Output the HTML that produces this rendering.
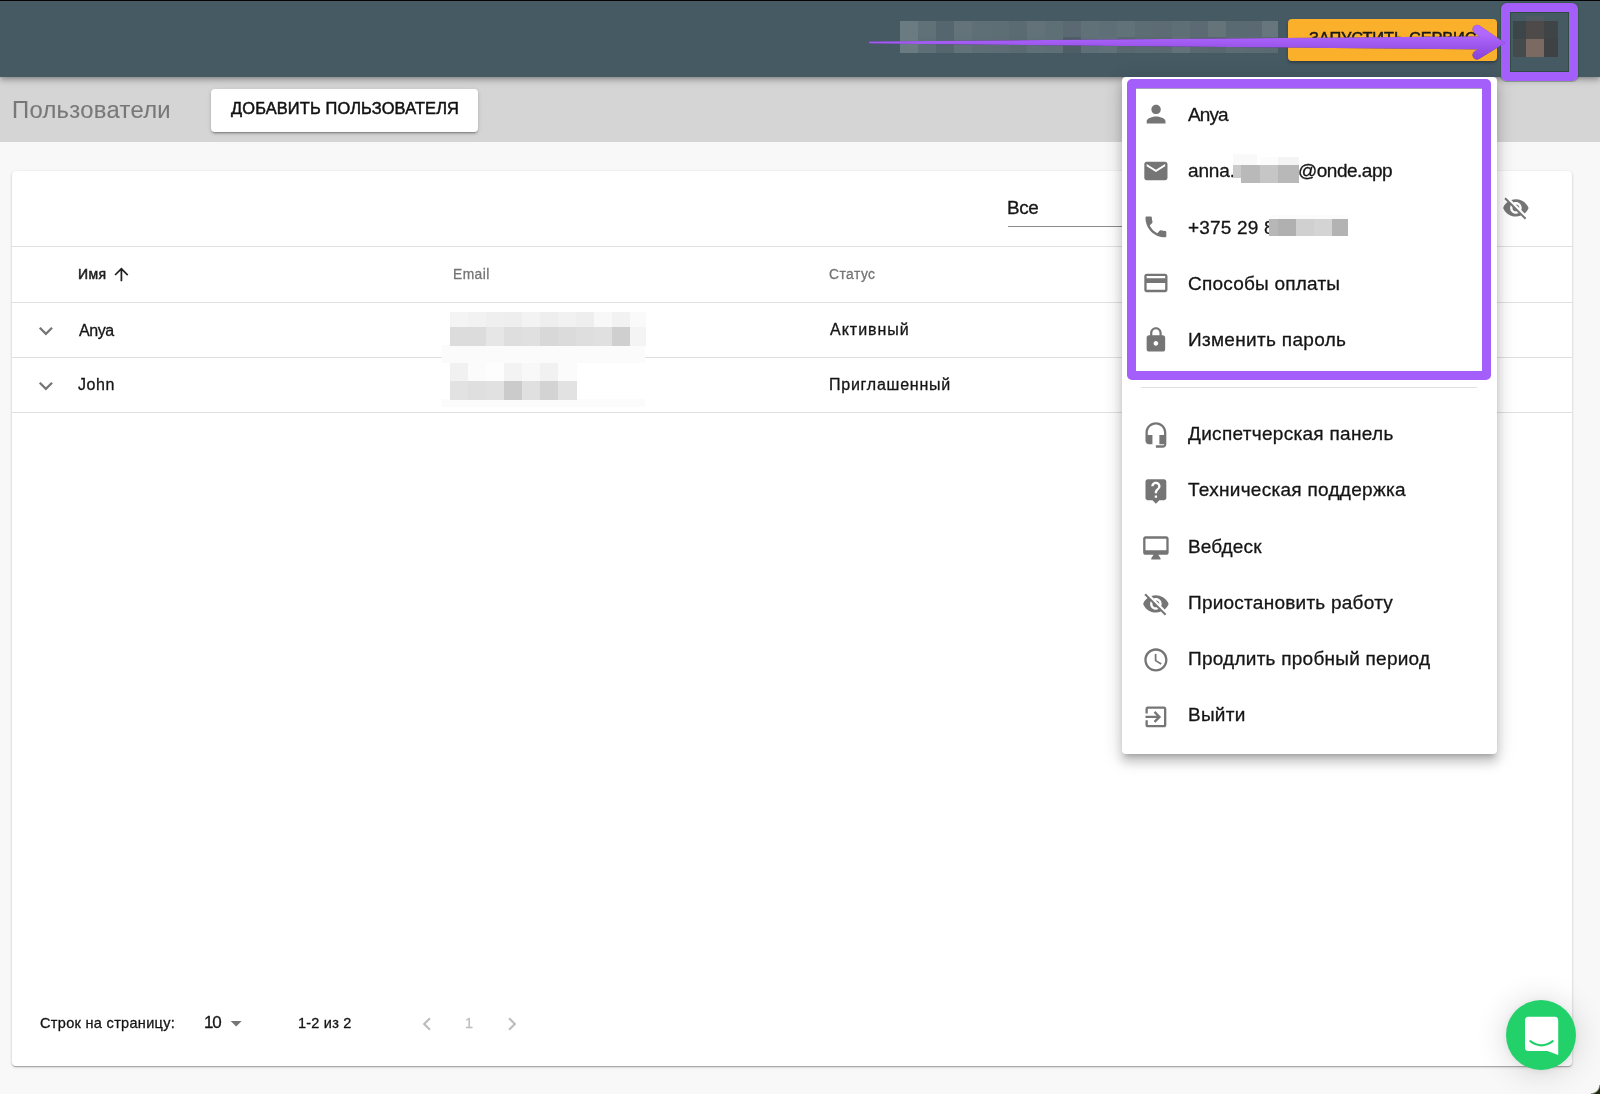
<!DOCTYPE html>
<html><head><meta charset="utf-8">
<style>
html,body{margin:0;padding:0;}
body{width:1600px;height:1094px;position:relative;overflow:hidden;background:#f8f8f8;font-family:"Liberation Sans",sans-serif;}
.a{position:absolute;}
.t{position:absolute;white-space:nowrap;will-change:transform;-webkit-text-stroke:0.3px currentColor;}
svg.i{position:absolute;}
.hr{position:absolute;height:1px;background:#e0e0e0;}
</style></head><body>
<div class="a" style="left:0;top:0;width:1600px;height:76.8px;background:#465a64;box-shadow:0 2px 4px -1px rgba(0,0,0,.2),0 4px 5px 0 rgba(0,0,0,.14),0 1px 10px 0 rgba(0,0,0,.12);z-index:3"></div>
<div class="a" style="left:0;top:0;width:1600px;height:1px;background:#050505;z-index:9"></div>
<div class="a" style="left:0;top:76px;width:1600px;height:66px;background:#d5d5d5;z-index:1"></div>
<div class="t" style="left:12.0px;top:95.67px;font-size:23.8px;line-height:28.56px;color:#787878;font-weight:400;letter-spacing:0.3px;z-index:2;-webkit-text-stroke:0.1px currentColor;">Пользователи</div>
<div class="a" style="left:211px;top:88.8px;width:266.8px;height:42.8px;background:#fff;border-radius:4px;box-shadow:0 3px 1px -2px rgba(0,0,0,.2),0 2px 2px 0 rgba(0,0,0,.14),0 1px 5px 0 rgba(0,0,0,.12);z-index:2"></div>
<div class="t" style="left:231px;top:99.37px;font-size:16.4px;line-height:19.68px;color:#111;font-weight:400;letter-spacing:0.15px;z-index:2;-webkit-text-stroke:0.5px currentColor;">ДОБАВИТЬ ПОЛЬЗОВАТЕЛЯ</div>
<div class="a" style="left:12px;top:171px;width:1560px;height:895px;background:#fff;border-radius:4px;box-shadow:0 1px 3px rgba(0,0,0,.2),0 1px 1px rgba(0,0,0,.14),0 2px 1px -1px rgba(0,0,0,.12);z-index:1"></div>
<div class="hr" style="left:12px;top:246px;width:1560px;z-index:2"></div>
<div class="hr" style="left:12px;top:302px;width:1560px;z-index:2"></div>
<div class="hr" style="left:12px;top:357px;width:1560px;z-index:2"></div>
<div class="hr" style="left:12px;top:412px;width:1560px;z-index:2"></div>
<div class="t" style="left:1007.4px;top:197.21px;font-size:18.9px;line-height:22.68px;color:#151515;font-weight:400;letter-spacing:-0.4px;z-index:2;">Все</div>
<div class="a" style="left:1008px;top:226px;width:130px;height:1px;background:#8c8c8c;z-index:2"></div>
<svg class="i" style="left:1501.50px;top:194.30px;z-index:2" width="27.8" height="27.8" viewBox="0 0 24 24"><path fill="#757575" d="M12 7c2.76 0 5 2.24 5 5 0 .65-.13 1.26-.36 1.83l2.92 2.92c1.51-1.26 2.7-2.89 3.43-4.75-1.73-4.39-6-7.5-11-7.5-1.4 0-2.74.25-3.98.7l2.16 2.16C10.74 7.13 11.35 7 12 7zM2 4.27l2.28 2.28.46.46C3.08 8.3 1.78 10.02 1 12c1.73 4.39 6 7.5 11 7.5 1.55 0 3.03-.3 4.38-.84l.42.42L19.73 22 21 20.73 3.27 3 2 4.27zM7.53 9.8l1.55 1.55c-.05.21-.08.43-.08.65 0 1.66 1.34 3 3 3 .22 0 .44-.03.65-.08l1.55 1.55c-.67.33-1.41.53-2.2.53-2.76 0-5-2.24-5-5 0-.79.2-1.53.53-2.2zm4.31-.78l3.15 3.15.02-.16c0-1.66-1.34-3-3-3l-.17.01z"/></svg>
<div class="t" style="left:77.75px;top:266.35px;font-size:14px;line-height:16.8px;color:#212121;font-weight:400;letter-spacing:0.45px;z-index:2;-webkit-text-stroke:0.5px currentColor;">Имя</div>
<svg class="i" style="left:110.80px;top:264.10px;z-index:2" width="20.8" height="20.8" viewBox="0 0 24 24"><path fill="#212121" d="M4 12l1.41 1.41L11 7.83V20h2V7.83l5.58 5.59L20 12l-8-8-8 8z"/></svg>
<div class="t" style="left:453.1px;top:266.74px;font-size:13.8px;line-height:16.56px;color:#757575;font-weight:400;letter-spacing:0.45px;z-index:2;">Email</div>
<div class="t" style="left:828.9px;top:266.54px;font-size:13.8px;line-height:16.56px;color:#757575;font-weight:400;letter-spacing:0.48px;z-index:2;">Статус</div>
<svg class="i" style="left:31.70px;top:316.80px;z-index:2" width="27.8" height="27.8" viewBox="0 0 24 24"><path fill="#757575" d="M16.59 8.59L12 13.17 7.41 8.59 6 10l6 6 6-6z"/></svg>
<div class="t" style="left:78.5px;top:320.65px;font-size:16.0px;line-height:19.2px;color:#151515;font-weight:400;letter-spacing:-0.4px;z-index:2;">Anya</div>
<div class="t" style="left:829.9px;top:320.15px;font-size:16.0px;line-height:19.2px;color:#151515;font-weight:400;letter-spacing:0.986px;z-index:2;">Активный</div>
<svg class="i" style="left:31.70px;top:371.60px;z-index:2" width="27.8" height="27.8" viewBox="0 0 24 24"><path fill="#757575" d="M16.59 8.59L12 13.17 7.41 8.59 6 10l6 6 6-6z"/></svg>
<div class="t" style="left:77.8px;top:375.45px;font-size:16.0px;line-height:19.2px;color:#151515;font-weight:400;letter-spacing:0.6px;z-index:2;">John</div>
<div class="t" style="left:828.9px;top:374.95px;font-size:16.0px;line-height:19.2px;color:#151515;font-weight:400;letter-spacing:0.755px;z-index:2;">Приглашенный</div>
<div class="a" style="left:442px;top:345px;width:203px;height:18px;background:#fbfbfb;z-index:2"></div>
<div class="a" style="left:442px;top:399px;width:203px;height:8px;background:#fbfbfb;z-index:2"></div>
<div class="a" style="left:450.0px;top:312.0px;width:18.5px;height:15.5px;background:#f4f4f4;z-index:2"></div>
<div class="a" style="left:468.0px;top:312.0px;width:18.5px;height:15.5px;background:#f2f2f2;z-index:2"></div>
<div class="a" style="left:486.0px;top:312.0px;width:18.5px;height:15.5px;background:#efefef;z-index:2"></div>
<div class="a" style="left:504.0px;top:312.0px;width:18.5px;height:15.5px;background:#eeeeee;z-index:2"></div>
<div class="a" style="left:522.0px;top:312.0px;width:18.5px;height:15.5px;background:#f3f3f3;z-index:2"></div>
<div class="a" style="left:540.0px;top:312.0px;width:18.5px;height:15.5px;background:#eeeeee;z-index:2"></div>
<div class="a" style="left:558.0px;top:312.0px;width:18.5px;height:15.5px;background:#f1f1f1;z-index:2"></div>
<div class="a" style="left:576.0px;top:312.0px;width:18.5px;height:15.5px;background:#eeeeee;z-index:2"></div>
<div class="a" style="left:594.0px;top:312.0px;width:18.5px;height:15.5px;background:#f8f8f8;z-index:2"></div>
<div class="a" style="left:612.0px;top:312.0px;width:18.5px;height:15.5px;background:#f2f2f2;z-index:2"></div>
<div class="a" style="left:630.0px;top:312.0px;width:15.5px;height:15.5px;background:#fafafa;z-index:2"></div>
<div class="a" style="left:450.0px;top:327.0px;width:18.5px;height:18.5px;background:#dcdcdc;z-index:2"></div>
<div class="a" style="left:468.0px;top:327.0px;width:18.5px;height:18.5px;background:#dcdcdc;z-index:2"></div>
<div class="a" style="left:486.0px;top:327.0px;width:18.5px;height:18.5px;background:#e6e6e6;z-index:2"></div>
<div class="a" style="left:504.0px;top:327.0px;width:18.5px;height:18.5px;background:#dedede;z-index:2"></div>
<div class="a" style="left:522.0px;top:327.0px;width:18.5px;height:18.5px;background:#e0e0e0;z-index:2"></div>
<div class="a" style="left:540.0px;top:327.0px;width:18.5px;height:18.5px;background:#d8d8d8;z-index:2"></div>
<div class="a" style="left:558.0px;top:327.0px;width:18.5px;height:18.5px;background:#dbdbdb;z-index:2"></div>
<div class="a" style="left:576.0px;top:327.0px;width:18.5px;height:18.5px;background:#dedede;z-index:2"></div>
<div class="a" style="left:594.0px;top:327.0px;width:18.5px;height:18.5px;background:#e0e0e0;z-index:2"></div>
<div class="a" style="left:612.0px;top:327.0px;width:18.5px;height:18.5px;background:#cfcfcf;z-index:2"></div>
<div class="a" style="left:630.0px;top:327.0px;width:15.5px;height:18.5px;background:#f4f4f4;z-index:2"></div>
<div class="a" style="left:450.0px;top:363.0px;width:18.5px;height:18.5px;background:#f1f1f1;z-index:2"></div>
<div class="a" style="left:468.0px;top:363.0px;width:18.5px;height:18.5px;background:#fbfbfb;z-index:2"></div>
<div class="a" style="left:486.0px;top:363.0px;width:18.5px;height:18.5px;background:#fdfdfd;z-index:2"></div>
<div class="a" style="left:504.0px;top:363.0px;width:18.5px;height:18.5px;background:#f3f3f3;z-index:2"></div>
<div class="a" style="left:522.0px;top:363.0px;width:18.5px;height:18.5px;background:#f8f8f8;z-index:2"></div>
<div class="a" style="left:540.0px;top:363.0px;width:18.5px;height:18.5px;background:#f1f1f1;z-index:2"></div>
<div class="a" style="left:558.0px;top:363.0px;width:18.5px;height:18.5px;background:#fbfbfb;z-index:2"></div>
<div class="a" style="left:450.0px;top:381.0px;width:18.5px;height:18.5px;background:#e2e2e2;z-index:2"></div>
<div class="a" style="left:468.0px;top:381.0px;width:18.5px;height:18.5px;background:#dfdfdf;z-index:2"></div>
<div class="a" style="left:486.0px;top:381.0px;width:18.5px;height:18.5px;background:#e1e1e1;z-index:2"></div>
<div class="a" style="left:504.0px;top:381.0px;width:18.5px;height:18.5px;background:#cbcbcb;z-index:2"></div>
<div class="a" style="left:522.0px;top:381.0px;width:18.5px;height:18.5px;background:#e0e0e0;z-index:2"></div>
<div class="a" style="left:540.0px;top:381.0px;width:18.5px;height:18.5px;background:#d3d3d3;z-index:2"></div>
<div class="a" style="left:558.0px;top:381.0px;width:18.5px;height:18.5px;background:#e2e2e2;z-index:2"></div>
<div class="t" style="left:40.1px;top:1015.37px;font-size:14.5px;line-height:17.4px;color:#151515;font-weight:400;letter-spacing:0.318px;z-index:2;">Строк на страницу:</div>
<div class="t" style="left:203.7px;top:1013.01px;font-size:17px;line-height:20.4px;color:#151515;font-weight:400;letter-spacing:-1.2px;z-index:2;">10</div>
<svg class="i" style="left:223.10px;top:1010.30px;z-index:2" width="26.4" height="26.4" viewBox="0 0 24 24"><path fill="#757575" d="M7 10l5 5 5-5z"/></svg>
<div class="t" style="left:298.2px;top:1015.27px;font-size:14.5px;line-height:17.4px;color:#151515;font-weight:400;letter-spacing:0.214px;z-index:2;">1-2 из 2</div>
<svg class="i" style="left:414.00px;top:1010.50px;z-index:2" width="26" height="26" viewBox="0 0 24 24"><path fill="#bdbdbd" d="M15.41 7.41L14 6l-6 6 6 6 1.41-1.41L10.83 12z"/></svg>
<div class="t" style="left:465.4px;top:1015.37px;font-size:14.4px;line-height:17.28px;color:#bdbdbd;font-weight:400;letter-spacing:0px;z-index:2;">1</div>
<svg class="i" style="left:499.00px;top:1010.50px;z-index:2" width="26" height="26" viewBox="0 0 24 24"><path fill="#bdbdbd" d="M10 6L8.59 7.41 13.17 12l-4.58 4.59L10 18l6-6z"/></svg>
<div class="a" style="left:900.0px;top:21px;width:18.5px;height:16px;background:#6b7b82;z-index:4"></div>
<div class="a" style="left:900.0px;top:37px;width:18.5px;height:16px;background:#6b7b82;z-index:4"></div>
<div class="a" style="left:918.1px;top:21px;width:18.5px;height:16px;background:#617178;z-index:4"></div>
<div class="a" style="left:918.1px;top:37px;width:18.5px;height:16px;background:#5f6f77;z-index:4"></div>
<div class="a" style="left:936.2px;top:21px;width:18.5px;height:16px;background:#56666f;z-index:4"></div>
<div class="a" style="left:936.2px;top:37px;width:18.5px;height:16px;background:#56666f;z-index:4"></div>
<div class="a" style="left:954.3px;top:21px;width:18.5px;height:16px;background:#637379;z-index:4"></div>
<div class="a" style="left:954.3px;top:37px;width:18.5px;height:16px;background:#627279;z-index:4"></div>
<div class="a" style="left:972.4px;top:21px;width:18.5px;height:16px;background:#5f6f76;z-index:4"></div>
<div class="a" style="left:972.4px;top:37px;width:18.5px;height:16px;background:#5e6e75;z-index:4"></div>
<div class="a" style="left:990.5px;top:21px;width:18.5px;height:16px;background:#5e6e75;z-index:4"></div>
<div class="a" style="left:990.5px;top:37px;width:18.5px;height:16px;background:#5e6d75;z-index:4"></div>
<div class="a" style="left:1008.6px;top:21px;width:18.5px;height:16px;background:#5b6b72;z-index:4"></div>
<div class="a" style="left:1008.6px;top:37px;width:18.5px;height:16px;background:#5a6a71;z-index:4"></div>
<div class="a" style="left:1026.7px;top:21px;width:18.5px;height:16px;background:#627278;z-index:4"></div>
<div class="a" style="left:1026.7px;top:37px;width:18.5px;height:16px;background:#607077;z-index:4"></div>
<div class="a" style="left:1044.8px;top:21px;width:18.5px;height:16px;background:#5f6f76;z-index:4"></div>
<div class="a" style="left:1044.8px;top:37px;width:18.5px;height:16px;background:#5f6f76;z-index:4"></div>
<div class="a" style="left:1062.9px;top:21px;width:18.5px;height:16px;background:#5b6a72;z-index:4"></div>
<div class="a" style="left:1062.9px;top:37px;width:18.5px;height:16px;background:#4f5e66;z-index:4"></div>
<div class="a" style="left:1081.0px;top:21px;width:18.5px;height:16px;background:#617178;z-index:4"></div>
<div class="a" style="left:1081.0px;top:37px;width:18.5px;height:16px;background:#5f6f77;z-index:4"></div>
<div class="a" style="left:1099.1px;top:21px;width:18.5px;height:16px;background:#5f6f77;z-index:4"></div>
<div class="a" style="left:1099.1px;top:37px;width:18.5px;height:16px;background:#617178;z-index:4"></div>
<div class="a" style="left:1117.2px;top:21px;width:18.5px;height:16px;background:#627279;z-index:4"></div>
<div class="a" style="left:1117.2px;top:37px;width:18.5px;height:16px;background:#59686f;z-index:4"></div>
<div class="a" style="left:1135.3px;top:21px;width:18.5px;height:16px;background:#5d6d74;z-index:4"></div>
<div class="a" style="left:1135.3px;top:37px;width:18.5px;height:16px;background:#5a6a71;z-index:4"></div>
<div class="a" style="left:1153.4px;top:21px;width:18.5px;height:16px;background:#5d6c74;z-index:4"></div>
<div class="a" style="left:1153.4px;top:37px;width:18.5px;height:16px;background:#5a6970;z-index:4"></div>
<div class="a" style="left:1171.5px;top:21px;width:18.5px;height:16px;background:#5f6f76;z-index:4"></div>
<div class="a" style="left:1171.5px;top:37px;width:18.5px;height:16px;background:#637278;z-index:4"></div>
<div class="a" style="left:1189.6px;top:21px;width:18.5px;height:16px;background:#5c6b73;z-index:4"></div>
<div class="a" style="left:1189.6px;top:37px;width:18.5px;height:16px;background:#5a6970;z-index:4"></div>
<div class="a" style="left:1207.7px;top:21px;width:18.5px;height:16px;background:#657479;z-index:4"></div>
<div class="a" style="left:1207.7px;top:37px;width:18.5px;height:16px;background:#58676e;z-index:4"></div>
<div class="a" style="left:1225.8px;top:21px;width:18.5px;height:16px;background:#5a6a72;z-index:4"></div>
<div class="a" style="left:1225.8px;top:37px;width:18.5px;height:16px;background:#5d6c73;z-index:4"></div>
<div class="a" style="left:1243.9px;top:21px;width:18.5px;height:16px;background:#5b6a72;z-index:4"></div>
<div class="a" style="left:1243.9px;top:37px;width:18.5px;height:16px;background:#5c6b72;z-index:4"></div>
<div class="a" style="left:1262.0px;top:21px;width:16.4px;height:16px;background:#66767c;z-index:4"></div>
<div class="a" style="left:1262.0px;top:37px;width:16.4px;height:16px;background:#5b6a71;z-index:4"></div>
<div class="a" style="left:1288px;top:19px;width:209px;height:42px;background:#fbb02b;border-radius:4px;box-shadow:0 2px 3px rgba(0,0,0,.3);z-index:4"></div>
<div class="t" style="left:1309px;top:28.87px;font-size:16.4px;line-height:19.68px;color:#1a1a1a;font-weight:400;letter-spacing:-0.13px;z-index:4;-webkit-text-stroke:0.5px currentColor;">ЗАПУСТИТЬ СЕРВИС</div>
<div class="a" style="left:1526px;top:15.6px;width:18px;height:6px;background:#4f5b62;z-index:4"></div>
<div class="a" style="left:1512.5px;top:21px;width:13.8px;height:17.75px;background:#3c4548;z-index:4"></div>
<div class="a" style="left:1526px;top:21px;width:18.3px;height:17.75px;background:#4e4a4a;z-index:4"></div>
<div class="a" style="left:1544px;top:21px;width:14.3px;height:17.75px;background:#3f4547;z-index:4"></div>
<div class="a" style="left:1512.5px;top:38.75px;width:13.8px;height:17.75px;background:#454a4d;z-index:4"></div>
<div class="a" style="left:1526px;top:38.75px;width:18.3px;height:17.75px;background:#7a6a62;z-index:4"></div>
<div class="a" style="left:1544px;top:38.75px;width:14.3px;height:17.75px;background:#3e4244;z-index:4"></div>
<div class="a" style="left:1500.6px;top:3.1px;width:59.4px;height:59.6px;border:9.5px solid #a45ffa;border-radius:6px;box-shadow:inset 0 0 0 1px rgba(20,60,20,.45),0 0 0 1px rgba(30,80,30,.35);z-index:8"></div>
<svg class="i" style="left:0;top:0;z-index:8;filter:drop-shadow(0 0.7px 0.6px rgba(0,20,0,.55))" width="1600" height="100" viewBox="0 0 1600 100">
<defs><linearGradient id="ag" gradientUnits="userSpaceOnUse" x1="0" y1="34" x2="0" y2="58"><stop offset="0" stop-color="#b068ff"/><stop offset="1" stop-color="#8a44da"/></linearGradient></defs>
<path fill="url(#ag)" d="M869.5 41.6 Q868.3 42.5 869.5 43.6 L1490 49.4 L1490 36.2 Z"/>
<path d="M1477 29.3 L1496.8 42.8 L1477 55" fill="none" stroke="url(#ag)" stroke-width="9" stroke-linecap="round" stroke-linejoin="miter" stroke-miterlimit="10"/>
</svg>
<div class="a" style="left:1122.2px;top:76.5px;width:375.3px;height:677.8px;background:#fff;border-radius:4px;box-shadow:0 5px 5px -3px rgba(0,0,0,.2),0 8px 10px 1px rgba(0,0,0,.14),0 3px 18px 3px rgba(0,0,0,.12);z-index:6"></div>
<div class="a" style="left:1126.7px;top:79px;width:346.2px;height:282.5px;border:9.2px solid #a45ffa;border-top-width:9.7px;border-radius:5px;box-shadow:inset 0 1px 0 rgba(60,40,120,.45);z-index:8"></div>
<div class="hr" style="left:1141px;top:387px;width:336px;z-index:7"></div>
<svg class="i" style="left:1141.80px;top:100.10px;z-index:7" width="28.2" height="28.2" viewBox="0 0 24 24"><path fill="#757575" d="M12 12c2.21 0 4-1.79 4-4s-1.79-4-4-4-4 1.79-4 4 1.79 4 4 4zm0 2c-2.67 0-8 1.34-8 4v2h16v-2c0-2.66-5.33-4-8-4z"/></svg>
<div class="t" style="left:1187.6px;top:104.01px;font-size:19.0px;line-height:22.8px;color:#151515;font-weight:400;letter-spacing:-0.9px;z-index:7;">Anya</div>
<svg class="i" style="left:1142.00px;top:156.60px;z-index:7" width="27.8" height="27.8" viewBox="0 0 24 24"><path fill="#757575" d="M20 4H4c-1.1 0-1.99.9-1.99 2L2 18c0 1.1.9 2 2 2h16c1.1 0 2-.9 2-2V6c0-1.1-.9-2-2-2zm0 4l-8 5-8-5V6l8 5 8-5v2z"/></svg>
<div class="t" style="left:1187.6px;top:160.31px;font-size:19.0px;line-height:22.8px;color:#151515;font-weight:400;letter-spacing:-0.15px;z-index:7;">anna.</div>
<div class="t" style="left:1298.3px;top:160.31px;font-size:19.0px;line-height:22.8px;color:#151515;font-weight:400;letter-spacing:-0.5px;z-index:7;">@onde.app</div>
<svg class="i" style="left:1142.00px;top:212.90px;z-index:7" width="27.8" height="27.8" viewBox="0 0 24 24"><path fill="#757575" d="M6.62 10.79c1.44 2.83 3.76 5.14 6.59 6.59l2.2-2.2c.27-.27.67-.36 1.02-.24 1.12.37 2.33.57 3.57.57.55 0 1 .45 1 1V20c0 .55-.45 1-1 1-9.39 0-17-7.61-17-17 0-.55.45-1 1-1h3.5c.55 0 1 .45 1 1 0 1.25.2 2.45.57 3.57.11.35.03.74-.25 1.02l-2.2 2.2z"/></svg>
<div class="t" style="left:1187.6px;top:216.61px;font-size:19.0px;line-height:22.8px;color:#151515;font-weight:400;letter-spacing:0.2px;z-index:7;">+375 29 8</div>
<svg class="i" style="left:1142.00px;top:269.20px;z-index:7" width="27.8" height="27.8" viewBox="0 0 24 24"><path fill="#757575" d="M20 4H4c-1.11 0-1.99.89-1.99 2L2 18c0 1.11.89 2 2 2h16c1.11 0 2-.89 2-2V6c0-1.11-.89-2-2-2zm0 14H4v-6h16v6zm0-10H4V6h16v2z"/></svg>
<div class="t" style="left:1187.6px;top:272.91px;font-size:19.0px;line-height:22.8px;color:#151515;font-weight:400;letter-spacing:0.223px;z-index:7;">Способы оплаты</div>
<svg class="i" style="left:1142.00px;top:325.50px;z-index:7" width="27.8" height="27.8" viewBox="0 0 24 24"><path fill="#757575" d="M18 8h-1V6c0-2.76-2.24-5-5-5S7 3.24 7 6v2H6c-1.1 0-2 .9-2 2v10c0 1.1.9 2 2 2h12c1.1 0 2-.9 2-2V10c0-1.1-.9-2-2-2zm-6 9c-1.1 0-2-.9-2-2s.9-2 2-2 2 .9 2 2-.9 2-2 2zm3.1-9H8.9V6c0-1.71 1.39-3.1 3.1-3.1 1.71 0 3.1 1.39 3.1 3.1v2z"/></svg>
<div class="t" style="left:1187.6px;top:329.21px;font-size:19.0px;line-height:22.8px;color:#151515;font-weight:400;letter-spacing:0.314px;z-index:7;">Изменить пароль</div>
<svg class="i" style="left:1142.00px;top:421.10px;z-index:7" width="27.8" height="27.8" viewBox="0 0 24 24"><path fill="#757575" d="M12 1c-4.97 0-9 4.03-9 9v7c0 1.66 1.34 3 3 3h3v-8H5v-2c0-3.87 3.13-7 7-7s7 3.13 7 7v2h-4v8h4v1h-7v2h6c1.66 0 3-1.34 3-3V10c0-4.97-4.03-9-9-9z"/></svg>
<div class="t" style="left:1187.6px;top:422.91px;font-size:19.0px;line-height:22.8px;color:#151515;font-weight:400;letter-spacing:0.3px;z-index:7;">Диспетчерская панель</div>
<svg class="i" style="left:1142.00px;top:477.40px;z-index:7" width="27.8" height="27.8" viewBox="0 0 24 24"><path fill="#757575" d="M19 2H5c-1.11 0-2 .9-2 2v14c0 1.1.89 2 2 2h4l3 3 3-3h4c1.1 0 2-.9 2-2V4c0-1.1-.9-2-2-2zm-6 16h-2v-2h2v2zm2.07-7.75l-.9.92C13.45 11.9 13 12.5 13 14h-2v-.5c0-1.1.45-2.1 1.17-2.83l1.24-1.26c.37-.36.59-.86.59-1.41 0-1.1-.9-2-2-2s-2 .9-2 2H8c0-2.21 1.79-4 4-4s4 1.79 4 4c0 .88-.36 1.68-.93 2.25z"/></svg>
<div class="t" style="left:1187.6px;top:479.21px;font-size:19.0px;line-height:22.8px;color:#151515;font-weight:400;letter-spacing:0.28px;z-index:7;">Техническая поддержка</div>
<svg class="i" style="left:1142.00px;top:533.70px;z-index:7" width="27.8" height="27.8" viewBox="0 0 24 24"><path fill="#757575" d="M21 2H3c-1.1 0-2 .9-2 2v12c0 1.1.9 2 2 2h7l-2 3v1h8v-1l-2-3h7c1.1 0 2-.9 2-2V4c0-1.1-.9-2-2-2zm0 12H3V4h18v10z"/></svg>
<div class="t" style="left:1187.6px;top:535.51px;font-size:19.0px;line-height:22.8px;color:#151515;font-weight:400;letter-spacing:0.167px;z-index:7;">Вебдеск</div>
<svg class="i" style="left:1142.00px;top:590.00px;z-index:7" width="27.8" height="27.8" viewBox="0 0 24 24"><path fill="#757575" d="M12 7c2.76 0 5 2.24 5 5 0 .65-.13 1.26-.36 1.83l2.92 2.92c1.51-1.26 2.7-2.89 3.43-4.75-1.73-4.39-6-7.5-11-7.5-1.4 0-2.74.25-3.98.7l2.16 2.16C10.74 7.13 11.35 7 12 7zM2 4.27l2.28 2.28.46.46C3.08 8.3 1.78 10.02 1 12c1.73 4.39 6 7.5 11 7.5 1.55 0 3.03-.3 4.38-.84l.42.42L19.73 22 21 20.73 3.27 3 2 4.27zM7.53 9.8l1.55 1.55c-.05.21-.08.43-.08.65 0 1.66 1.34 3 3 3 .22 0 .44-.03.65-.08l1.55 1.55c-.67.33-1.41.53-2.2.53-2.76 0-5-2.24-5-5 0-.79.2-1.53.53-2.2zm4.31-.78l3.15 3.15.02-.16c0-1.66-1.34-3-3-3l-.17.01z"/></svg>
<div class="t" style="left:1187.6px;top:591.81px;font-size:19.0px;line-height:22.8px;color:#151515;font-weight:400;letter-spacing:0.242px;z-index:7;">Приостановить работу</div>
<svg class="i" style="left:1142.00px;top:646.30px;z-index:7" width="27.8" height="27.8" viewBox="0 0 24 24"><path fill="#757575" d="M11.99 2C6.47 2 2 6.48 2 12s4.47 10 9.99 10C17.52 22 22 17.52 22 12S17.52 2 11.99 2zM12 20c-4.42 0-8-3.58-8-8s3.58-8 8-8 8 3.58 8 8-3.58 8-8 8zm.5-13H11v6l5.25 3.15.75-1.23-4.5-2.67z"/></svg>
<div class="t" style="left:1187.6px;top:648.11px;font-size:19.0px;line-height:22.8px;color:#151515;font-weight:400;letter-spacing:0.245px;z-index:7;">Продлить пробный период</div>
<svg class="i" style="left:1142.00px;top:702.60px;z-index:7" width="27.8" height="27.8" viewBox="0 0 24 24"><path fill="#757575" d="M10.09 15.59L11.5 17l5-5-5-5-1.41 1.41L12.67 11H3v2h9.67l-2.58 2.59zM19 3H5c-1.11 0-2 .9-2 2v4h2V5h14v14H5v-4H3v4c0 1.1.89 2 2 2h14c1.1 0 2-.9 2-2V5c0-1.1-.9-2-2-2z"/></svg>
<div class="t" style="left:1187.6px;top:704.41px;font-size:19.0px;line-height:22.8px;color:#151515;font-weight:400;letter-spacing:0.25px;z-index:7;">Выйти</div>
<div class="a" style="left:1233px;top:153.9px;width:24.0px;height:11.3px;background:#f9f9f9;z-index:7"></div>
<div class="a" style="left:1260.2px;top:156.5px;width:17.8px;height:8.7px;background:#fcfcfc;z-index:7"></div>
<div class="a" style="left:1278px;top:156.5px;width:20.8px;height:8.7px;background:#f4f4f4;z-index:7"></div>
<div class="a" style="left:1233px;top:165.2px;width:8.1px;height:12.6px;background:#cacaca;z-index:7"></div>
<div class="a" style="left:1241.1px;top:165.2px;width:19.1px;height:17.6px;background:#b9b9b9;z-index:7"></div>
<div class="a" style="left:1260.2px;top:165.2px;width:17.8px;height:17.6px;background:#c6c6c6;z-index:7"></div>
<div class="a" style="left:1278px;top:165.2px;width:20.8px;height:17.6px;background:#b8b8b8;z-index:7"></div>
<div class="a" style="left:1269.3px;top:215px;width:78.6px;height:4.0px;background:#fcfcfc;z-index:7"></div>
<div class="a" style="left:1269.3px;top:219px;width:9.1px;height:17.0px;background:#b7b7b7;z-index:7"></div>
<div class="a" style="left:1278.4px;top:219px;width:17.8px;height:17.0px;background:#b0b0b0;z-index:7"></div>
<div class="a" style="left:1296.2px;top:219px;width:17.8px;height:17.0px;background:#d0d0d0;z-index:7"></div>
<div class="a" style="left:1314px;top:219px;width:18.3px;height:17.0px;background:#d4d4d4;z-index:7"></div>
<div class="a" style="left:1332.3px;top:219px;width:15.6px;height:17.0px;background:#b3b3b3;z-index:7"></div>
<div class="a" style="left:1506px;top:999.8px;width:70.4px;height:70.4px;border-radius:50%;background:#23d16b;box-shadow:0 1px 6px rgba(0,0,0,.06),0 2px 32px rgba(0,0,0,.16);z-index:9"></div>
<svg class="i" style="left:1506px;top:1000px;z-index:10" width="71" height="71" viewBox="1506 1000 71 71">
<path fill="#fff" d="M1528.5 1016.7 H1554.7 Q1558.2 1016.7 1558.2 1020.2 V1055 L1547.5 1051 H1528.5 Q1525 1051 1525 1047.5 V1020.2 Q1525 1016.7 1528.5 1016.7 Z"/>
<path d="M1530.3 1041.2 Q1541.5 1049.5 1552.7 1041.2" fill="none" stroke="#23d16b" stroke-width="2.1" stroke-linecap="round"/>
</svg>
<div class="a" style="left:1591px;top:1085px;width:9px;height:9px;background:radial-gradient(circle at 0 0, rgba(248,248,248,0) 7px, rgba(255,255,255,.95) 7.6px, #1c2a0c 9.5px);z-index:20"></div>
</body></html>
